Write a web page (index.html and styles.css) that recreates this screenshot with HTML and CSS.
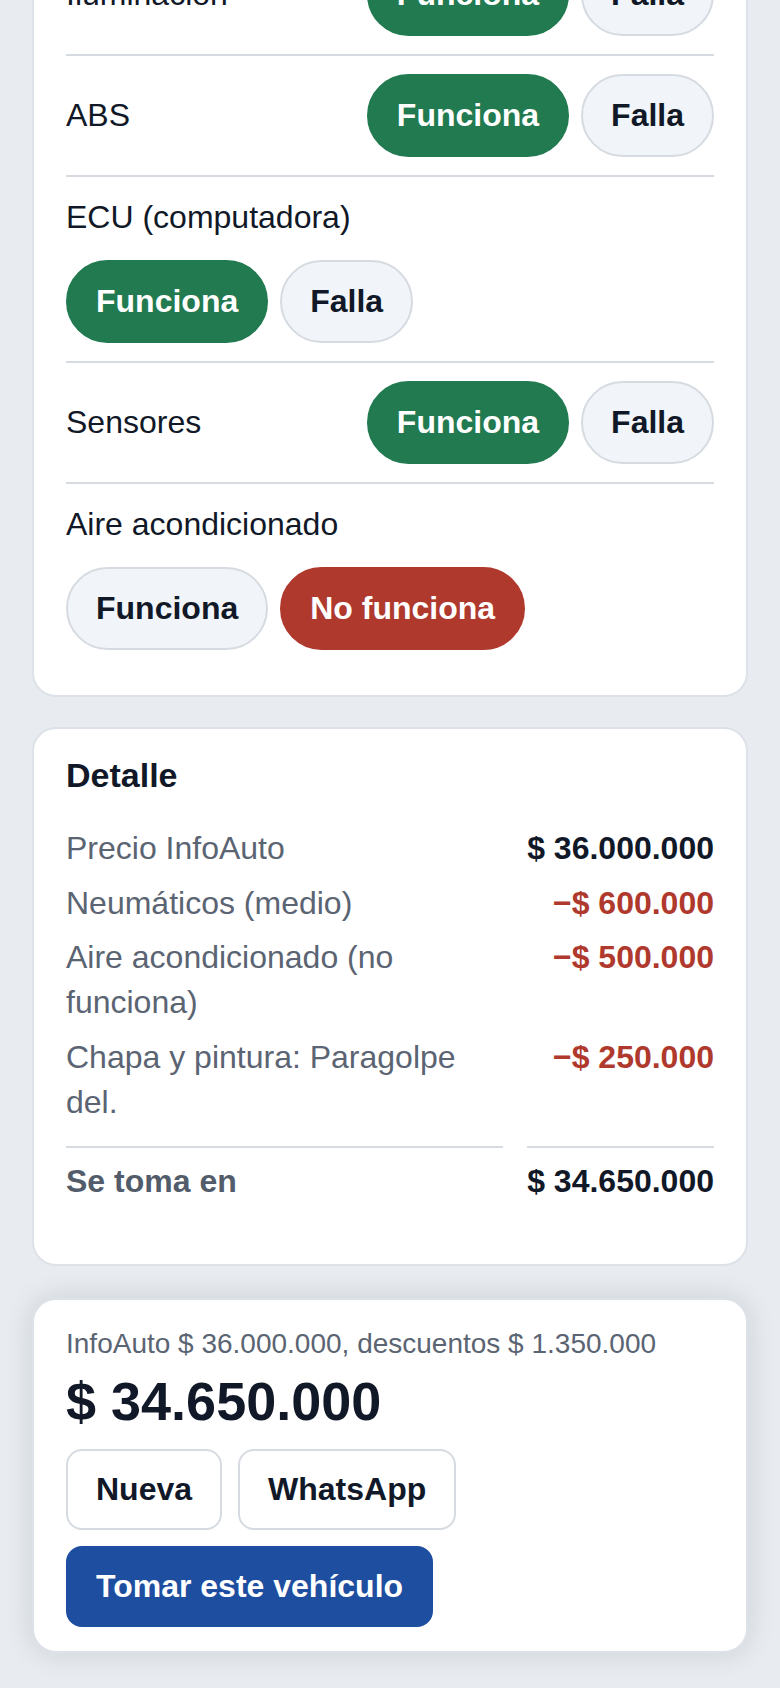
FILE: index.html
```html
<!DOCTYPE html>
<html lang="es">
<head>
<meta charset="utf-8">
<title>Tasación</title>
<link rel="stylesheet" href="styles.css">
</head>
<body>
<main class="page">
  <section class="card checks">
    <div class="check-row inline">
      <span class="check-label">Iluminación</span>
      <div class="choices">
        <button class="choice ok">Funciona</button>
        <button class="choice">Falla</button>
      </div>
    </div>
    <div class="check-row inline">
      <span class="check-label">ABS</span>
      <div class="choices">
        <button class="choice ok">Funciona</button>
        <button class="choice">Falla</button>
      </div>
    </div>
    <div class="check-row stacked">
      <span class="check-label">ECU (computadora)</span>
      <div class="choices">
        <button class="choice ok">Funciona</button>
        <button class="choice">Falla</button>
      </div>
    </div>
    <div class="check-row inline">
      <span class="check-label">Sensores</span>
      <div class="choices">
        <button class="choice ok">Funciona</button>
        <button class="choice">Falla</button>
      </div>
    </div>
    <div class="check-row stacked">
      <span class="check-label">Aire acondicionado</span>
      <div class="choices">
        <button class="choice">Funciona</button>
        <button class="choice bad">No funciona</button>
      </div>
    </div>
  </section>

  <section class="card detail">
    <h2 class="detail-title">Detalle</h2>
    <div class="detail-grid">
      <span class="d-label">Precio InfoAuto</span>
      <span class="d-value">$ 36.000.000</span>
      <span class="d-label">Neumáticos (medio)</span>
      <span class="d-value neg">−$ 600.000</span>
      <span class="d-label">Aire acondicionado (no funciona)</span>
      <span class="d-value neg">−$ 500.000</span>
      <span class="d-label">Chapa y pintura: Paragolpe del.</span>
      <span class="d-value neg">−$ 250.000</span>
      <span class="d-label total">Se toma en</span>
      <span class="d-value total">$ 34.650.000</span>
    </div>
  </section>

  <section class="card summary">
    <p class="summary-sub">InfoAuto $ 36.000.000, descuentos $ 1.350.000</p>
    <p class="summary-price">$ 34.650.000</p>
    <div class="actions">
      <button class="btn">Nueva</button>
      <button class="btn">WhatsApp</button>
    </div>
    <div class="actions">
      <button class="btn btn-primary">Tomar este vehículo</button>
    </div>
  </section>
</main>
</body>
</html>
```

FILE: styles.css
```css
* {
  box-sizing: border-box;
}

html, body {
  margin: 0;
  padding: 0;
}

body {
  background: #e8ecf0;
  font-family: "Liberation Sans", Arial, sans-serif;
  font-size: 32px;
  line-height: 1.4;
  color: #111827;
}

.page {
  display: flex;
  flex-direction: column;
  gap: 32px;
  padding: 0 32px 36px;
  margin-top: -91px;
}

.card {
  background: #ffffff;
  border: 2px solid #dde2e8;
  border-radius: 24px;
  padding: 24px 32px;
}

/* ---- checks card ---- */
.checks {
  padding-bottom: 27px;
  margin-bottom: -2px;
}

.check-row {
  padding: 18px 0;
  border-top: 2px solid #d6dbe2;
}

.check-row:first-child {
  border-top: 0;
}

.check-row.inline {
  display: flex;
  align-items: center;
  justify-content: space-between;
}

.check-row.stacked {
  display: flex;
  flex-direction: column;
  align-items: flex-start;
  gap: 20px;
}

.check-label {
  color: #111827;
}

.choices {
  display: flex;
  gap: 12px;
}

.choice {
  font-family: inherit;
  font-size: 32px;
  font-weight: 700;
  line-height: 39px;
  padding: 20px 28px;
  border: 2px solid #d6dbe1;
  border-radius: 999px;
  background: #f1f5f9;
  color: #111827;
}

.choice.ok {
  background: #217a50;
  border-color: #217a50;
  color: #ffffff;
}

.choice.bad {
  background: #b0392e;
  border-color: #b0392e;
  color: #ffffff;
}

/* ---- detail card ---- */
.detail-title {
  margin: 0 0 24px;
  font-size: 34px;
  line-height: 1.3;
  font-weight: 700;
  color: #111827;
}

.detail-grid {
  display: grid;
  grid-template-columns: 1fr auto;
  column-gap: 24px;
}

.d-label,
.d-value {
  padding: 5px 0;
}

.d-label {
  color: #5b6472;
}

.d-value {
  text-align: right;
  font-weight: 700;
  color: #111827;
  white-space: nowrap;
}

.d-value.neg {
  color: #b0392e;
}

.d-label.total,
.d-value.total {
  margin-top: 16px;
  border-top: 2px solid #d6dbe2;
  padding-top: 11px;
  padding-bottom: 37px;
}

.d-label.total {
  font-weight: 700;
  color: #525c6a;
}

/* ---- summary card ---- */
.summary {
  box-shadow: 0 0 28px rgba(15, 23, 42, 0.13);
  display: flex;
  flex-direction: column;
  align-items: flex-start;
}

.summary-sub {
  margin: 0;
  font-size: 28px;
  line-height: 1.4;
  color: #5b6472;
}

.summary-price {
  margin: 5px 0 0;
  font-size: 54px;
  line-height: 1.2;
  font-weight: 700;
  color: #111827;
}

.actions {
  display: flex;
  gap: 16px;
  margin-top: 16px;
}

.btn {
  font-family: inherit;
  font-size: 32px;
  font-weight: 700;
  line-height: normal;
  padding: 20px 28px;
  border: 2px solid #d6dbe1;
  border-radius: 16px;
  background: #ffffff;
  color: #111827;
}

.btn-primary {
  background: #1e4ea0;
  border-color: #1e4ea0;
  color: #ffffff;
}
```
